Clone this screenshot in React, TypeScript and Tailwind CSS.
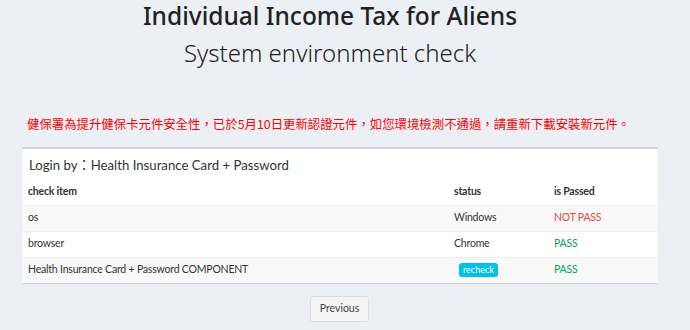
const rows = [
  { item: 'os', status: 'Windows', passed: false },
  { item: 'browser', status: 'Chrome', passed: true },
  { item: 'Health Insurance Card + Password COMPONENT', status: null, passed: true },
];

export default function App() {
  return (
    <div
      className="min-h-screen bg-[#ecf0f5] text-[#333]"
      style={{ fontFamily: 'Lato, "Noto Sans CJK TC", sans-serif' }}
    >
      <div className="pr-[30px] text-center text-[#222]" style={{ fontFamily: '"Noto Sans", sans-serif' }}>
        <h1 className="text-[24.5px] leading-[32px] font-medium">Individual Income Tax for Aliens</h1>
        <h2 className="mt-[5px] text-[24px] leading-[32px] font-light">System environment check</h2>
      </div>

      <p
        className="mt-[46px] pl-[27px] text-[12.4px] leading-[18px] text-[#ff0000]"
        style={{ fontFamily: '"Noto Sans CJK TC", sans-serif' }}
      >
        健保署為提升健保卡元件安全性，已於5月10日更新認證元件，如您環境檢測不通過，請重新下載安裝新元件。
      </p>

      <div className="mx-[22px] mt-[14px] w-[636px] bg-white border-t-2 border-[#d2d6de] shadow-[0_1px_1px_rgba(0,0,0,0.12)]">
        <div className="px-[7px] pt-[6px] pb-[4px] text-[13.2px] leading-[20px] text-[#333]">
          Login by：Health Insurance Card + Password
        </div>
        <table className="w-full text-[10.5px] tracking-[-0.2px] text-[#333]">
          <thead>
            <tr className="h-[26px] text-left">
              <th className="pl-[6px] font-bold">check item</th>
              <th className="w-[101px] pl-[1px] font-bold">status</th>
              <th className="w-[104px] font-bold">is Passed</th>
            </tr>
          </thead>
          <tbody>
            {rows.map((r, i) => (
              <tr key={r.item} className={`h-[26px] border-t border-[#f0f0f0] ${i % 2 === 0 ? 'bg-[#f9f9f9]' : 'bg-white'}`}>
                <td className="pl-[6px]">{r.item}</td>
                <td className="pl-[1px]">
                  {r.status ?? (
                    <button className="ml-[5px] rounded-[3px] bg-[#00c0ef] px-[4px] text-[9px] leading-[14px] tracking-normal text-white">
                      recheck
                    </button>
                  )}
                </td>
                <td className={r.passed ? 'text-[#00a65a]' : 'text-[#dd4b39]'}>
                  {r.passed ? 'PASS' : 'NOT PASS'}
                </td>
              </tr>
            ))}
          </tbody>
        </table>
      </div>

      <div className="mt-[13px] flex justify-center pr-[11px]">
        <button className="h-[26px] rounded-[3px] border border-[#ddd] bg-[#f4f4f4] px-[9px] text-[10.5px] text-[#444]">
          Previous
        </button>
      </div>
    </div>
  );
}
